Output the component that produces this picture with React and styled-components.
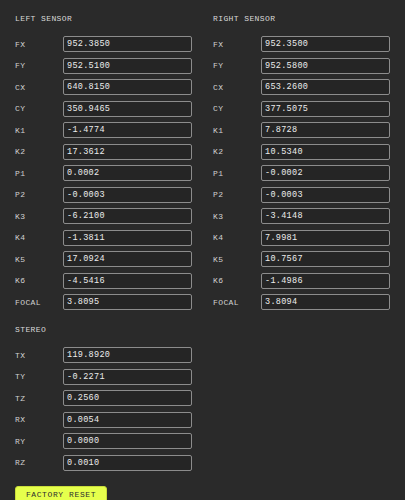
import React from 'react'
import styled, { createGlobalStyle } from 'styled-components'

const GlobalStyle = createGlobalStyle`
  html, body {
    margin: 0;
    padding: 0;
    background: #2a2a2a;
  }
`

const Page = styled.div`
  box-sizing: border-box;
  width: 405px;
  min-height: 500px;
  padding: 12px 14px 0 15px;
  background: #2a2a2a;
  font-family: 'Liberation Mono', 'DejaVu Sans Mono', monospace;
  color: #d6d6d6;
`

const Columns = styled.div`
  display: grid;
  grid-template-columns: 198px 178px;
`

const Section = styled.section`
  display: flex;
  flex-direction: column;
  margin-top: ${p => p.$top || 0}px;
`

const Heading = styled.h2`
  margin: 0 0 10px;
  height: 14px;
  line-height: 14px;
  font-size: 8px;
  font-weight: normal;
  letter-spacing: 0.4px;
  text-transform: uppercase;
  color: #d8d8d8;
`

const Rows = styled.div`
  display: flex;
  flex-direction: column;
  gap: 5.5px;
`

const Row = styled.label`
  display: flex;
  align-items: center;
  height: 16px;
`

const Label = styled.span`
  width: 48px;
  font-size: 8px;
  letter-spacing: 0.4px;
  color: #d0d0d0;
`

const Field = styled.input`
  box-sizing: border-box;
  width: 129px;
  height: 16px;
  padding: 0 3px;
  border: 1px solid #8c8c8c;
  border-radius: 2px;
  background: #252525;
  color: #ececec;
  font-family: inherit;
  font-size: 8.5px;
  letter-spacing: 0.3px;
  outline: none;
`

const ResetButton = styled.button`
  margin-top: 15px;
  width: 92px;
  height: 18px;
  border: 1px solid #c9dc3a;
  border-radius: 3px;
  background: #e6ff4c;
  color: #2e2e2e;
  font-family: inherit;
  font-size: 8px;
  letter-spacing: 0.6px;
  padding: 0;
  cursor: pointer;
`

const left = [
  ['FX', '952.3850'], ['FY', '952.5100'], ['CX', '640.8150'], ['CY', '350.9465'],
  ['K1', '-1.4774'], ['K2', '17.3612'], ['P1', '0.0002'], ['P2', '-0.0003'],
  ['K3', '-6.2100'], ['K4', '-1.3811'], ['K5', '17.0924'], ['K6', '-4.5416'],
  ['FOCAL', '3.8095'],
]

const right = [
  ['FX', '952.3500'], ['FY', '952.5800'], ['CX', '653.2600'], ['CY', '377.5075'],
  ['K1', '7.8728'], ['K2', '10.5340'], ['P1', '-0.0002'], ['P2', '-0.0003'],
  ['K3', '-3.4148'], ['K4', '7.9981'], ['K5', '10.7567'], ['K6', '-1.4986'],
  ['FOCAL', '3.8094'],
]

const stereo = [
  ['TX', '119.8920'], ['TY', '-0.2271'], ['TZ', '0.2560'],
  ['RX', '0.0054'], ['RY', '0.0000'], ['RZ', '0.0010'],
]

const ParamList = ({ items }) => (
  <Rows>
    {items.map(([name, value]) => (
      <Row key={name}>
        <Label>{name}</Label>
        <Field defaultValue={value} />
      </Row>
    ))}
  </Rows>
)

export default function App() {
  return (
    <Page>
      <GlobalStyle />
      <Columns>
        <Section>
          <Heading>Left Sensor</Heading>
          <ParamList items={left} />
        </Section>
        <Section>
          <Heading>Right Sensor</Heading>
          <ParamList items={right} />
        </Section>
      </Columns>
      <Section $top={13}>
        <Heading>Stereo</Heading>
        <ParamList items={stereo} />
      </Section>
      <ResetButton>FACTORY RESET</ResetButton>
    </Page>
  )
}
